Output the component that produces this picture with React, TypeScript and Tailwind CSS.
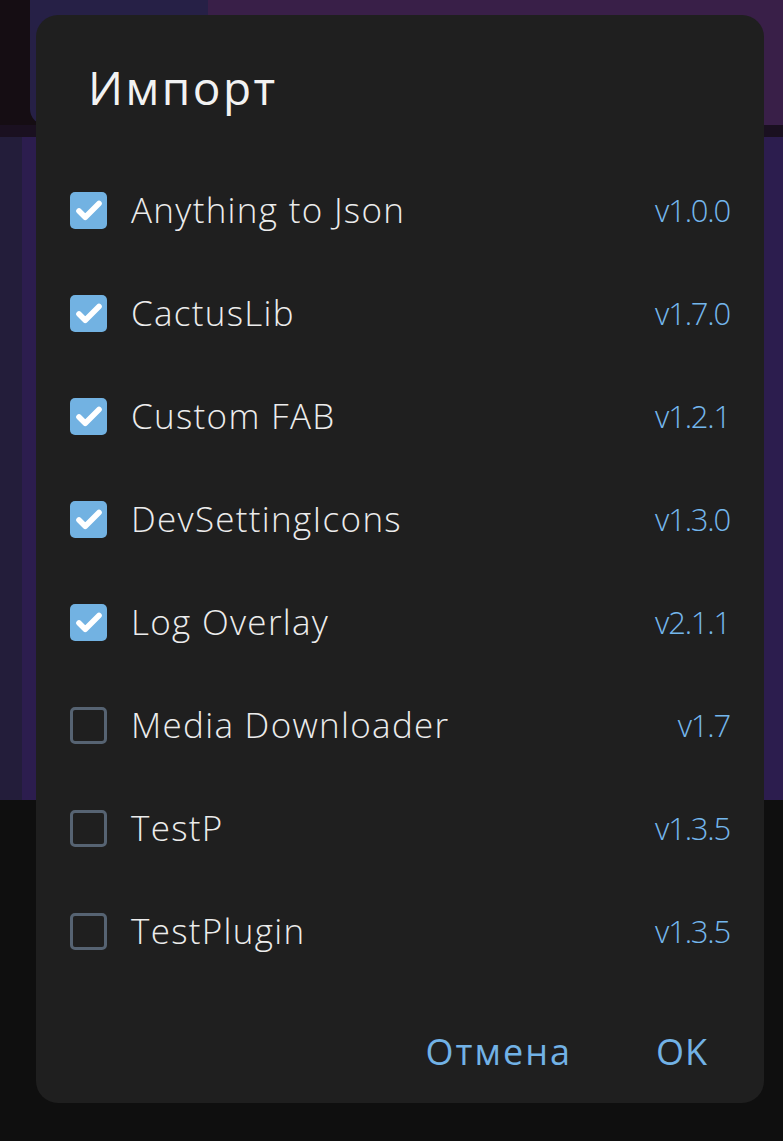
import { Check } from 'lucide-react';

const plugins = [
  { name: 'Anything to Json', version: 'v1.0.0', checked: true },
  { name: 'CactusLib', version: 'v1.7.0', checked: true },
  { name: 'Custom FAB', version: 'v1.2.1', checked: true },
  { name: 'DevSettingIcons', version: 'v1.3.0', checked: true },
  { name: 'Log Overlay', version: 'v2.1.1', checked: true },
  { name: 'Media Downloader', version: 'v1.7', checked: false },
  { name: 'TestP', version: 'v1.3.5', checked: false },
  { name: 'TestPlugin', version: 'v1.3.5', checked: false },
];

function Box({ checked }: { checked: boolean }) {
  if (checked) {
    return (
      <div className="w-[37px] h-[37px] rounded-[5px] bg-[#72b2e2] flex items-center justify-center shrink-0">
        <Check className="w-[30px] h-[30px] text-white" strokeWidth={4.5} />
      </div>
    );
  }
  return <div className="w-[37px] h-[37px] rounded-[5px] border-[3px] border-[#566372] shrink-0" />;
}

export default function App() {
  return (
    <div className="relative w-[783px] h-[1141px] overflow-hidden bg-[#101010] font-['Open_Sans',sans-serif]">
      {/* dimmed screen behind the dialog */}
      <div className="flex flex-col h-full">
        <div className="flex h-[125px] bg-[#150d13]">
          <div className="w-[30px]" />
          <div className="w-[178px] bg-[#262046] rounded-bl-[16px]" />
          <div className="flex-1 bg-[#391f48]" />
        </div>
        <div className="h-[12px] bg-[#1a1020]" />
        <div className="flex h-[663px]">
          <div className="w-[22px] bg-[#231d3a]" />
          <div className="flex-1 bg-[#2c1d4e]" />
        </div>
        <div className="flex-1 bg-[#0f0f0f]" />
      </div>

      <div className="absolute left-[36px] top-[15px] w-[728px] h-[1088px] rounded-[22px] bg-[#1f1f1f] flex flex-col">
        <div className="h-[144px] pt-[44px] pl-[52px]">
          <h1 className="text-[46px] leading-[56px] font-medium text-[#f2f2f2] tracking-[2.5px]">Импорт</h1>
        </div>
        <div className="flex flex-col">
          {plugins.map((p) => (
            <div key={p.name} className="h-[103px] flex items-center pl-[34px] pr-[34px]">
              <Box checked={p.checked} />
              <span className="ml-[24px] flex-1 text-[35px] font-light text-[#ececec] tracking-[1.3px]">{p.name}</span>
              <span className="text-[31px] font-light text-[#74b6ec] tracking-[-1.2px]">{p.version}</span>
            </div>
          ))}
        </div>
        <div className="flex-1 flex items-start justify-end gap-[84px] pt-[46px] pr-[56px]">
          <span className="text-[36px] leading-[46px] font-medium text-[#72b2e6] tracking-[2px]">Отмена</span>
          <span className="text-[36px] leading-[46px] font-medium text-[#72b2e6] tracking-[1px]">OK</span>
        </div>
      </div>
    </div>
  );
}
